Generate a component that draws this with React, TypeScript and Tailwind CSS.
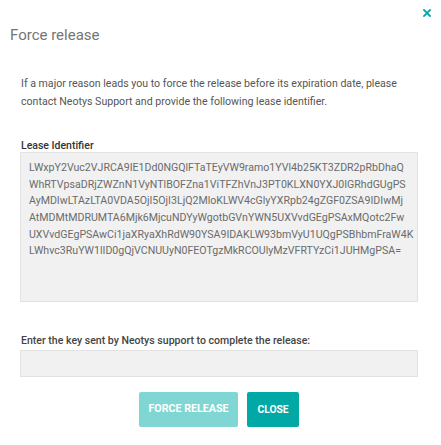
import React from "react";

const LEASE = [
  "LWxpY2Vuc2VJRCA9IE1Dd0NGQlFTaTEyVW9ramo1YVl4b25KT3ZDR2pRbDhaQ",
  "WhRTVpsaDRjZWZnN1VyNTlBOFZna1ViTFZhVnJ3PT0KLXN0YXJ0IGRhdGUgPS",
  "AyMDIwLTAzLTA0VDA5OjI5OjI3LjQ2MloKLWV4cGlyYXRpb24gZGF0ZSA9IDIwMj",
  "AtMDMtMDRUMTA6Mjk6MjcuNDYyWgotbGVnYWN5UXVvdGEgPSAxMQotc2Fw",
  "UXVvdGEgPSAwCi1jaXRyaXhRdW90YSA9IDAKLW93bmVyU1UQgPSBhbmFraW4K",
  "LWhvc3RuYW1lID0gQjVCNUUyN0FEOTgzMkRCOUlyMzVFRTYzCi1JUHMgPSA=",
];

export default function App() {
  return (
    <div className="relative h-[445px] w-[441px] overflow-hidden bg-white font-['Roboto','Noto_Sans',sans-serif]">
      <button className="absolute right-[10px] top-[9px] h-[8px] w-[8px] text-[#00a9a5]">
        <svg viewBox="0 0 8 8" width="8" height="8" className="block">
          <path d="M1 1 L7 7 M7 1 L1 7" stroke="currentColor" strokeWidth="1.8" strokeLinecap="square" />
        </svg>
      </button>
      <div className="pl-[10px] pt-[26px]">
        <h1 className="text-[15px] leading-[18px] text-[#757575]">Force release</h1>
      </div>
      <div className="pl-[20px] pr-[23px] pt-[31px]">
        <p className="pl-[1px] text-[10.6px] leading-[18px] text-[#555]">
          If a major reason leads you to force the release before its expiration date, please contact Neotys Support and provide the following lease identifier.
        </p>
        <div className="mt-[28px] pl-[1px] text-[10.5px] font-medium leading-[13px] text-[#333]">Lease Identifier</div>
        <div className="h-[150px] border border-[#e2e2e2] bg-[#f1f1f1] pl-[8px] pt-[7px] text-[10.6px] leading-[16.67px] text-[#6b6b6b]">
          {LEASE.map((l, i) => (
            <div key={i} className="whitespace-nowrap">
              {l}
            </div>
          ))}
        </div>
        <div className="mt-[32px] pl-[1px] text-[10.55px] font-medium leading-[14px] text-[#444]">
          Enter the key sent by Neotys support to complete the release:
        </div>
        <div className="mt-[2px] h-[27px] border border-[#e2e2e2] bg-[#f1f1f1]" />
        <div className="mt-[15px] flex justify-center gap-[9px]">
          <button className="h-[35px] w-[99px] rounded-[2px] bg-[#80d6d3] text-[10.7px] font-bold text-white">
            FORCE RELEASE
          </button>
          <button className="h-[35px] w-[52px] rounded-[2px] bg-[#00a9a5] text-[10.3px] font-bold text-white">
            CLOSE
          </button>
        </div>
      </div>
    </div>
  );
}
